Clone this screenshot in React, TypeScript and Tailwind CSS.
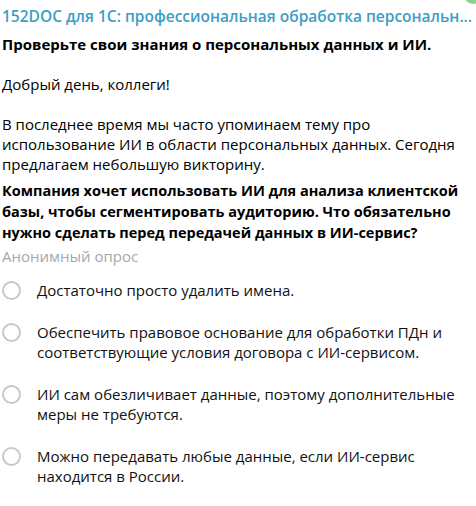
import React from "react";

const options = [
  ["Достаточно просто удалить имена."],
  ["Обеспечить правовое основание для обработки ПДн и", "соответствующие условия договора с ИИ-сервисом."],
  ["ИИ сам обезличивает данные, поэтому дополнительные", "меры не требуются."],
  ["Можно передавать любые данные, если ИИ-сервис", "находится в России."],
];

export default function App() {
  return (
    <main
      className="relative w-[476px] h-[506px] overflow-hidden bg-white text-[#000000] text-[15px]"
      style={{ fontFamily: '"Open Sans", "Noto Sans", sans-serif' }}
    >
      <div className="absolute right-[-6px] top-[-14px] w-[18px] h-[18px] rounded-full bg-[#8fd18a]" />
      <div className="px-[2px] pt-[5px]">
        <div className="text-[15.5px] font-semibold text-[#3c9ec4] leading-[22px] whitespace-nowrap overflow-hidden">
          152DOC для 1С: профессиональная обработка персональн...
        </div>
        <p className="mt-[7px] font-bold leading-[20px]">Проверьте свои знания о персональных данных и ИИ.</p>
        <p className="mt-[20px] leading-[20px]">Добрый день, коллеги!</p>
        <p className="mt-[20px] leading-[20px] whitespace-nowrap">
          В последнее время мы часто упоминаем тему про
          <br />
          использование ИИ в области персональных данных. Сегодня
          <br />
          предлагаем небольшую викторину.
        </p>
        <p className="mt-[6px] font-bold text-[14.5px] leading-[21px] whitespace-nowrap">
          Компания хочет использовать ИИ для анализа клиентской
          <br />
          базы, чтобы сегментировать аудиторию. Что обязательно
          <br />
          нужно сделать перед передачей данных в ИИ-сервис?
        </p>
        <p className="mt-[3px] text-[#a3a9ae] leading-[20px]">Анонимный опрос</p>
        <ul className="mt-[14px] flex flex-col gap-[22px]">
          {options.map((o) => (
            <li key={o[0]} className="flex items-start gap-[16px]">
              <span className="mt-[1px] w-[19px] h-[19px] shrink-0 rounded-full border-2 border-[#c6cace] bg-white" />
              <span className="leading-[20px] text-[#111111] whitespace-nowrap">
                {o.map((line, i) => (
                  <React.Fragment key={line}>
                    {i > 0 && <br />}
                    {line}
                  </React.Fragment>
                ))}
              </span>
            </li>
          ))}
        </ul>
      </div>
    </main>
  );
}
